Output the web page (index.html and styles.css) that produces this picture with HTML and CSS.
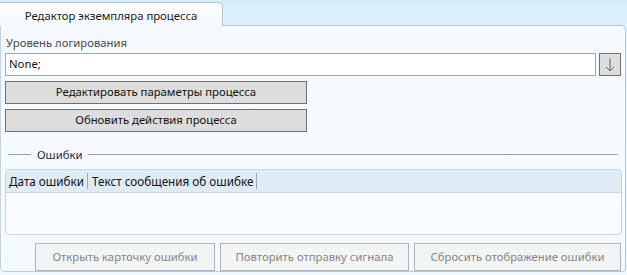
FILE: index.html
```html
<!DOCTYPE html>
<html>
<head>
<meta charset="utf-8">
<link rel="stylesheet" href="styles.css">
</head>
<body>
<div class="tabstrip">
  <div class="tab">Редактор экземпляра процесса</div>
</div>
<div class="panel">
  <div class="label">Уровень логирования</div>
  <div class="combo">
    <div class="input">None;</div>
    <div class="arrow">
      <svg width="22" height="22" viewBox="0 0 22 22"><path d="M11 3.5 V17.5 M6.5 13 L11 17.5 L15.5 13" fill="none" stroke="#555" stroke-width="1"/></svg>
    </div>
  </div>
  <div class="btn">Редактировать параметры процесса</div>
  <div class="btn">Обновить действия процесса</div>
  <div class="group">
    <span class="gl short"></span><span class="gtitle">Ошибки</span><span class="gl long"></span>
  </div>
  <div class="grid">
    <div class="ghead">
      <span class="col c1">Дата ошибки</span><span class="col c2">Текст сообщения об ошибке</span>
    </div>
  </div>
  <div class="actions">
    <div class="dbtn b1">Открыть карточку ошибки</div>
    <div class="dbtn b2">Повторить отправку сигнала</div>
    <div class="dbtn b3">Сбросить отображение ошибки</div>
  </div>
</div>
</body>
</html>
```
FILE: styles.css
```css
html, body { margin: 0; padding: 0; }
body {
  width: 627px; height: 275px; overflow: hidden;
  font-family: "Noto Sans", "Open Sans", sans-serif;
  font-size: 11.3px;
  color: #1e1e1e;
  background: linear-gradient(180deg, #d6eefc 0%, #e4f4fd 20%, #eef8fe 100%);
}
.tabstrip { height: 25px; display: flex; align-items: flex-end; }
.tab {
  box-sizing: border-box;
  width: 223px; height: 24px;
  border: 1px solid #b9c9d6; border-bottom: none; border-left: none;
  border-radius: 0 5px 0 0;
  background: linear-gradient(180deg, #ffffff 0%, #f3f9fd 100%);
  display: flex; align-items: center; justify-content: center;
  color: #1a1a1a;
  padding-top: 1px;
  position: relative; z-index: 1; margin-bottom: -1px;
}
.panel {
  box-sizing: border-box;
  width: 626px; height: 247px;
  border: 1px solid #b9c9d6; border-left-color: #c5d3de;
  border-radius: 0 5px 4px 5px;
  background: linear-gradient(180deg, #f3f9fd 0%, #f6fbff 60%, #f3f9fd 100%);
  padding: 8px 4px 0 4px;
  display: flex; flex-direction: column;
}
.label { height: 18px; line-height: 18px; color: #4a4a4a; padding-left: 1px; }
.combo { display: flex; height: 23px; margin-top: 1px; }
.input {
  box-sizing: border-box; width: 591px; height: 23px;
  border: 1px solid #a8a8a8; background: #fff;
  padding-left: 3px; line-height: 20px; color: #111;
}
.arrow {
  box-sizing: border-box; width: 22px; height: 23px; margin-left: 3px;
  border: 1px solid #707070; background: #dddddd;
  display: flex; align-items: center; justify-content: center;
}
.btn {
  box-sizing: border-box; width: 302px; height: 23px;
  border: 1px solid #707070; background: #dddddd;
  text-align: center; line-height: 20px; color: #111;
}
.combo + .btn { margin-top: 5px; }
.btn + .btn { margin-top: 5px; }
.group { display: flex; align-items: center; margin-top: 15px; height: 16px; padding-right: 3px; }
.gl { height: 1px; background: #a0a0a0; }
.gl.short { width: 23px; margin-left: 3px; }
.gl.long { flex: 1; }
.gtitle { padding: 0 6px; color: #1f2a44; line-height: 16px; }
.grid {
  box-sizing: border-box; width: 617px; height: 67px; margin-top: 6px;
  border: 1px solid #c9d5df; border-radius: 4px;
  background: #f8fcff; overflow: hidden;
}
.ghead {
  height: 22px; background: #dfebf5; border-bottom: 1px solid #c9d5df;
  display: flex; align-items: center;
}
.col {
  box-sizing: border-box; padding-left: 3px; white-space: nowrap;
  border-right: 1px solid #9aa8b4; line-height: 16px; color: #111; font-size: 11.7px;
}
.c1 { width: 82px; }
.c2 { width: 169px; padding-left: 4px; }
.actions { display: flex; margin-top: 8px; padding-left: 30px; gap: 5px; }
.dbtn {
  box-sizing: border-box; height: 28px;
  border: 1px solid #b0b4b8; background: #f3f4f4;
  color: #868686; text-align: center; line-height: 25px;
}
.b1 { width: 180px; }
.b2 { width: 189px; }
.b3 { width: 207px; }
```
